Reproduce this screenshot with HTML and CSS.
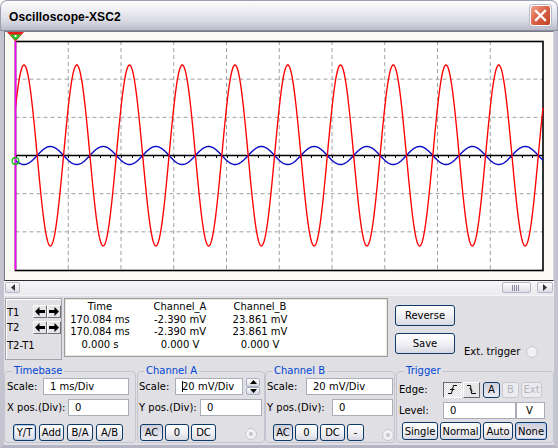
FILE: index.html
```html
<!DOCTYPE html>
<html lang="en">

<head>
    <meta charset="UTF-8">
    <title>Oscilloscope-XSC2</title>
    <link rel="stylesheet" href="styles.css">
</head>

<body>

    <div class="window">
        <div class="titlebar">
            <span class="title">Oscilloscope-XSC2</span>
            <span class="close">
                <svg width="13" height="13" viewBox="0 0 13 13">
                    <path d="M2 2L11 11M11 2L2 11" stroke="#fff" stroke-width="2.4" stroke-linecap="square" />
                </svg>
            </span>
        </div>

        <div class="frame">
            <div class="screen">
                <svg id="plot" width="548" height="248" viewBox="5 32 548 248">
                    <rect x="15.5" y="41.5" width="527.5" height="229" fill="#ffffff" />
                    <g id="grid" stroke="#a0a0a0" stroke-dasharray="4 3" stroke-width="1"></g>
                    <g id="axis" stroke="#000" stroke-width="1.5"></g>
                    <g id="ticks" stroke="#000" stroke-width="1"></g>
                    <rect x="15.5" y="41.5" width="527.5" height="229" fill="none" stroke="#000" stroke-width="1.6" />
                    <path id="waveB" fill="none" stroke="#0a0ac8" stroke-width="1.4" />
                    <path id="waveA" fill="none" stroke="#ff0000" stroke-width="1.35" />
                    <line x1="15.5" y1="34" x2="15.5" y2="270" stroke="#ff00ff" stroke-width="1.6" />
                    <polygon points="7,32 24,32 15.5,41.5" fill="#ee1c1c" />
                    <polygon points="9.5,34.5 21.5,34.5 15.5,40.5" fill="#22c322" />
                    <rect x="14.5" y="35" width="2" height="2" fill="#fff" />
                    <circle cx="15.5" cy="161" r="3.4" fill="none" stroke="#00c000" stroke-width="1.2" />
                </svg>
            </div>

            <div class="scrollbar">
                <span class="sb-btn sb-left">
                    <svg width="6" height="7" viewBox="0 0 6 7"><path d="M5 0V7L1 3.5Z" fill="#333" /></svg>
                </span>
                <span class="sb-thumb">
                    <svg width="9" height="6" viewBox="0 0 9 6"><path d="M0.5 0V6M2.5 0V6M4.5 0V6M6.5 0V6" stroke="#8a8aa0" /></svg>
                </span>
                <span class="sb-btn sb-right">
                    <svg width="6" height="7" viewBox="0 0 6 7"><path d="M1 0V7L5 3.5Z" fill="#333" /></svg>
                </span>
            </div>

            <div class="panel">
                <div class="readout">
                    <div class="tpanel">
                        <span class="tlabel t1">T1</span>
                        <span class="arrows">
                            <span class="abtn"><svg width="10" height="9" viewBox="0 0 10 9"><path d="M0 4.5L4.5 0V3H10V6H4.5V9Z" /></svg></span>
                            <span class="abtn"><svg width="10" height="9" viewBox="0 0 10 9"><path d="M10 4.5L5.5 0V3H0V6H5.5V9Z" /></svg></span>
                        </span>
                        <span class="tlabel">T2</span>
                        <span class="arrows">
                            <span class="abtn"><svg width="10" height="9" viewBox="0 0 10 9"><path d="M0 4.5L4.5 0V3H10V6H4.5V9Z" /></svg></span>
                            <span class="abtn"><svg width="10" height="9" viewBox="0 0 10 9"><path d="M10 4.5L5.5 0V3H0V6H5.5V9Z" /></svg></span>
                        </span>
                        <span class="tlabel tdiff">T2-T1</span>
                    </div>

                    <div class="databox">
                        <span>Time</span><span>Channel_A</span><span>Channel_B</span>
                        <span>170.084 ms</span><span>-2.390 mV</span><span>23.861 mV</span>
                        <span>170.084 ms</span><span>-2.390 mV</span><span>23.861 mV</span>
                        <span>0.000 s</span><span>0.000 V</span><span>0.000 V</span>
                    </div>

                    <div class="actions">
                        <span class="xbtn big">Reverse</span>
                        <span class="xbtn big">Save</span>
                    </div>

                    <div class="ext">
                        <span>Ext. trigger</span>
                        <span class="radio"></span>
                    </div>
                </div>

                <div class="groups">
                    <fieldset class="group timebase">
                        <legend>Timebase</legend>
                        <div class="line row1">
                            <span class="lab">Scale:</span>
                            <span class="field">1 ms/Div</span>
                        </div>
                        <div class="line row2">
                            <span class="lab">X pos.(Div):</span>
                            <span class="field">0</span>
                        </div>
                        <div class="line btnrow">
                            <span class="xbtn focus w23">Y/T</span>
                            <span class="xbtn w25">Add</span>
                            <span class="xbtn w26">B/A</span>
                            <span class="xbtn w27">A/B</span>
                        </div>
                    </fieldset>

                    <fieldset class="group chan-a">
                        <legend>Channel A</legend>
                        <div class="line row1">
                            <span class="lab">Scale:</span>
                            <span class="field"><i class="caret"></i>20 mV/Div</span>
                            <span class="spin">
                                <span class="spin-btn"><svg width="7" height="4" viewBox="0 0 7 4"><path d="M0 4L3.5 0L7 4Z" /></svg></span>
                                <span class="spin-btn"><svg width="7" height="4" viewBox="0 0 7 4"><path d="M0 0L3.5 4L7 0Z" /></svg></span>
                            </span>
                        </div>
                        <div class="line row2">
                            <span class="lab">Y pos.(Div):</span>
                            <span class="field">0</span>
                        </div>
                        <div class="line btnrow">
                            <span class="xbtn on w23">AC</span>
                            <span class="xbtn w24">0</span>
                            <span class="xbtn w25">DC</span>
                            <span class="radio dot"></span>
                        </div>
                    </fieldset>

                    <fieldset class="group chan-b">
                        <legend>Channel B</legend>
                        <div class="line row1">
                            <span class="lab">Scale:</span>
                            <span class="field">20 mV/Div</span>
                        </div>
                        <div class="line row2">
                            <span class="lab">Y pos.(Div):</span>
                            <span class="field">0</span>
                        </div>
                        <div class="line btnrow">
                            <span class="xbtn on w20">AC</span>
                            <span class="xbtn w23">0</span>
                            <span class="xbtn w25">DC</span>
                            <span class="xbtn w17">-</span>
                            <span class="radio dot"></span>
                        </div>
                    </fieldset>

                    <fieldset class="group trigger">
                        <legend>Trigger</legend>
                        <div class="line row1">
                            <span class="lab">Edge:</span>
                            <span class="edge down">
                                <svg width="11" height="11" viewBox="0 0 11 11"><path d="M1 9.5H4.5L6.5 1.5H10M3 5.5H7.5" fill="none" stroke="#000" /></svg>
                            </span>
                            <span class="edge">
                                <svg width="11" height="11" viewBox="0 0 11 11"><path d="M1 1.5H4.5L5.5 9.5H10M3.5 4.5L6.5 7" fill="none" stroke="#000" /></svg>
                            </span>
                            <span class="xbtn on w17 gap-l">A</span>
                            <span class="xbtn off w17">B</span>
                            <span class="xbtn off w21">Ext</span>
                        </div>
                        <div class="line row2">
                            <span class="lab">Level:</span>
                            <span class="field level">0</span>
                            <span class="field unit">V</span>
                        </div>
                        <div class="line btnrow">
                            <span class="xbtn w36">Single</span>
                            <span class="xbtn w41">Normal</span>
                            <span class="xbtn w30">Auto</span>
                            <span class="xbtn focus on w32">None</span>
                        </div>
                    </fieldset>
                </div>
            </div>
        </div>
    </div>

    <script>
        const NS = 'http://www.w3.org/2000/svg';
        const plotLeft = 15.5, plotRight = 543, plotTop = 41, plotBottom = 270;
        const divX = (plotRight - plotLeft) / 10;
        const divY = (plotBottom - plotTop) / 6;
        const mid = plotTop + divY * 3;

        function addLine(group, x1, y1, x2, y2) {
            const l = document.createElementNS(NS, 'line');
            l.setAttribute('x1', x1);
            l.setAttribute('y1', y1);
            l.setAttribute('x2', x2);
            l.setAttribute('y2', y2);
            group.appendChild(l);
        }

        // Dashed grid
        const grid = document.getElementById('grid');
        for (let i = 1; i < 10; i++) {
            const x = plotLeft + i * divX;
            addLine(grid, x, plotTop, x, plotBottom);
        }
        for (let j = 1; j < 6; j++) {
            if (j === 3) continue;
            const y = plotTop + j * divY;
            addLine(grid, plotLeft, y, plotRight, y);
        }

        // Centre axis with small ticks below it
        addLine(document.getElementById('axis'), plotLeft, mid, plotRight, mid);
        const ticks = document.getElementById('ticks');
        for (let x = plotLeft; x < plotRight; x += divX / 5) {
            const tx = Math.round(x) + 0.5;
            addLine(ticks, tx, mid, tx, mid + 2.5);
        }

        // One period per division, channel B is inverted and small
        function wave(amp) {
            let d = '';
            for (let x = plotLeft; x <= plotRight; x += 0.5) {
                const y = mid - amp * Math.cos(2 * Math.PI * (x - 24) / divX);
                d += (d ? 'L' : 'M') + x.toFixed(1) + ' ' + y.toFixed(2);
            }
            return d;
        }
        document.getElementById('waveA').setAttribute('d', wave(90.5));
        document.getElementById('waveB').setAttribute('d', wave(-9));
    </script>

</body>

</html>
```

FILE: styles.css
```css
html {
    background: #ffffff;
}

body {
    margin: 0;
    font-family: "DejaVu Sans", Verdana, sans-serif;
    font-size: 10px;
    color: #000;
}

.window {
    width: 558px;
    height: 448px;
    box-sizing: border-box;
    display: flex;
    flex-direction: column;
}

/* Title bar */
.titlebar {
    height: 31px;
    box-sizing: border-box;
    display: flex;
    align-items: center;
    padding: 2px 6px 0 8px;
    background: linear-gradient(#fdfdfe, #ececf2 35%, #d9d9e3 70%, #b9b9c9);
    border-radius: 7px 7px 0 0;
    border: 1px solid #9d9db0;
    border-bottom: 1px solid #8c8ca0;
}

.title {
    font-family: "Liberation Sans", Arial, sans-serif;
    font-weight: bold;
    font-size: 12px;
    letter-spacing: 0.1px;
}

.close {
    margin-left: auto;
    margin-top: -2px;
    width: 21px;
    height: 21px;
    box-sizing: border-box;
    border: 1px solid #ffffff;
    border-radius: 3px;
    background: linear-gradient(135deg, #f2a593, #dc6548 45%, #bd3e23);
    box-shadow: 0 0 0 1px #b9b9c9;
    display: flex;
    align-items: center;
    justify-content: center;
}

/* Window body */
.frame {
    flex: 1;
    display: flex;
    flex-direction: column;
    background: #e0dfe3;
    border-left: 4px solid #c4c4d0;
    border-right: 4px solid #c4c4d0;
    border-bottom: 3px solid #b4b4c4;
}

.screen {
    height: 250px;
    box-sizing: border-box;
    background: #fbfbf4;
    border-top: 1px solid #7a7a86;
    border-left: 1px solid #7a7a86;
    border-bottom: 1px solid #2c2c2c;
    border-right: 1px solid #d6d6dc;
}

#plot {
    display: block;
}

.scrollbar {
    height: 15px;
    box-sizing: border-box;
    display: flex;
    padding: 1px 1px 0 1px;
    background: linear-gradient(#f6f6f8, #ebebef);
    border-bottom: 1px solid #f4f4f6;
}

.sb-btn {
    width: 15px;
    height: 11px;
    box-sizing: border-box;
    border: 1px solid #b5b5c5;
    border-radius: 2px;
    background: linear-gradient(#ffffff, #dcdce6);
    display: flex;
    align-items: center;
    justify-content: center;
}

.sb-thumb {
    margin-left: auto;
    margin-right: 6px;
    width: 29px;
    height: 11px;
    box-sizing: border-box;
    border: 1px solid #b5b5c5;
    border-radius: 2px;
    background: linear-gradient(#ffffff, #dcdce6);
    display: flex;
    align-items: center;
    justify-content: center;
}

.sb-right {
    width: 16px;
}

.panel {
    flex: 1;
    display: flex;
    flex-direction: column;
}

/* Cursor readout */
.readout {
    display: flex;
    height: 62px;
    margin-top: 2px;
}

.tpanel {
    width: 57px;
    margin-left: 1px;
    box-sizing: border-box;
    border: 1px solid #a2a2ae;
    box-shadow: inset 1px 1px #ffffff;
    display: grid;
    grid-template-columns: 26px 28px;
    grid-template-rows: 13px 13px 12px;
    row-gap: 3px;
    padding: 6px 0 0 1px;
}

.tlabel {
    align-self: center;
    line-height: 12px;
}

.t1 {
    margin-top: 3px;
}

.tdiff {
    grid-column: 1 / 3;
    margin-top: 6px;
}

.arrows {
    display: flex;
}

.abtn {
    width: 14px;
    height: 13px;
    box-sizing: border-box;
    border: 1px solid;
    border-color: #ffffff #707070 #707070 #ffffff;
    background: #e6e6e8;
    display: flex;
    align-items: center;
    justify-content: center;
}

.databox {
    margin-left: 2px;
    width: 324px;
    height: 59px;
    box-sizing: border-box;
    background: #ffffff;
    border: 1px solid #9a9aa4;
    box-shadow: inset 0 0 0 1px #ecead6;
    display: grid;
    grid-template-columns: 70px 90px 70px;
    grid-auto-rows: 12.6px;
    align-content: start;
    padding-top: 2px;
    line-height: 12.6px;
    text-align: center;
    white-space: nowrap;
}

.actions {
    margin-left: 7px;
    padding-top: 7px;
    display: flex;
    flex-direction: column;
    gap: 7px;
}

.ext {
    margin-left: 9px;
    align-self: flex-end;
    margin-bottom: 2px;
    display: flex;
    align-items: center;
    gap: 6px;
    line-height: 12px;
}

/* Buttons and fields */
.xbtn {
    height: 17px;
    box-sizing: border-box;
    border: 1px solid #0e3a6a;
    border-radius: 3px;
    background: linear-gradient(#ffffff, #f1f1f5 50%, #d8d8e2);
    display: inline-flex;
    align-items: center;
    justify-content: center;
    line-height: 15px;
}

.xbtn.big {
    width: 60px;
    height: 21px;
}

.xbtn.on {
    background: linear-gradient(#cfcfdb, #dedee8 50%, #ececf2);
}

.xbtn.focus {
    box-shadow: inset 0 0 0 1px #b8ccee;
}

.xbtn.off {
    color: #b4b4bc;
    border-color: #c8c8d0;
    background: #ececf0;
}

.w17 { width: 17px; }
.w20 { width: 20px; }
.w21 { width: 21px; }
.w23 { width: 23px; }
.w24 { width: 24px; }
.w25 { width: 25px; }
.w26 { width: 26px; }
.w27 { width: 27px; }
.w30 { width: 30px; }
.w32 { width: 32px; }
.w36 { width: 36px; }
.w41 { width: 41px; }

.field {
    height: 17px;
    box-sizing: border-box;
    background: #ffffff;
    border: 1px solid #a8adb6;
    padding-left: 6px;
    line-height: 15px;
    white-space: nowrap;
    display: flex;
    align-items: center;
}

.caret {
    width: 1px;
    height: 11px;
    background: #000;
    margin-right: -1px;
}

.radio {
    width: 12px;
    height: 12px;
    box-sizing: border-box;
    border: 1px solid #c6c6cc;
    border-radius: 50%;
    background: #f2f2f4;
    display: flex;
    align-items: center;
    justify-content: center;
}

.radio.dot::after {
    content: "";
    width: 4px;
    height: 4px;
    border-radius: 50%;
    background: #c4c4ca;
}

.spin {
    margin-left: 3px;
    width: 14px;
    height: 17px;
    display: flex;
    flex-direction: column;
}

.spin-btn {
    flex: 1;
    box-sizing: border-box;
    border: 1px solid #a8adc0;
    border-radius: 2px;
    background: linear-gradient(#ffffff, #d8d8e4);
    display: flex;
    align-items: center;
    justify-content: center;
}

.edge {
    width: 17px;
    height: 16px;
    box-sizing: border-box;
    border: 1px solid;
    border-color: #ffffff #6a6a6a #6a6a6a #ffffff;
    background: #e6e6e8;
    display: flex;
    align-items: center;
    justify-content: center;
}

.edge.down {
    width: 19px;
    margin-right: 1px;
    border-color: #6a6a6a #ffffff #ffffff #6a6a6a;
    background: repeating-conic-gradient(#ffffff 0 25%, #dcdce0 0 50%) 0 0 / 2px 2px;
}

/* Group boxes */
.groups {
    display: flex;
    margin-top: 5px;
}

.group {
    margin: 0;
    padding: 0;
    min-width: 0;
    height: 78px;
    box-sizing: border-box;
    border: 1px solid #c4c4ce;
    border-radius: 4px;
}

.group legend {
    padding: 0 2px;
    margin-left: 5px;
    color: #0046d5;
    line-height: 12px;
}

.line {
    display: flex;
    align-items: center;
    height: 17px;
}

.row1 {
    margin-top: 1px;
}

.row2 {
    margin-top: 4px;
}

.btnrow {
    margin-top: 8px;
    gap: 2px;
}

.timebase {
    width: 132px;
    padding-left: 2px;
}

.timebase .row1 .lab { width: 36px; }
.timebase .row1 .field { width: 86px; }
.timebase .row2 .lab { width: 61px; }
.timebase .row2 .field { width: 61px; }
.timebase .btnrow { padding-left: 6px; gap: 3px; }

.chan-a {
    width: 128px;
    margin-left: 1px;
    padding-left: 1px;
}

.chan-a .row1 .lab { width: 36px; }
.chan-a .row1 .field { width: 68px; }
.chan-a .row2 .lab { width: 61px; }
.chan-a .row2 .field { width: 62px; }
.chan-a .btnrow { padding-left: 1px; gap: 2px; }
.chan-a .radio { margin-left: 27px; margin-top: 3px; }

.chan-b {
    width: 130px;
    padding-left: 1px;
}

.chan-b .row1 .lab { width: 39px; }
.chan-b .row1 .field { width: 87px; }
.chan-b .row2 .lab { width: 65px; }
.chan-b .row2 .field { width: 61px; }
.chan-b .btnrow { padding-left: 6px; gap: 2px; }
.chan-b .radio { margin-left: 16px; margin-top: 4px; }

.trigger {
    width: 158px;
    margin-left: 1px;
    padding-left: 2px;
}

.trigger .lab { width: 44px; }
.trigger .row1 { margin-top: 4px; height: 17px; gap: 0; }
.trigger .row1 .xbtn { height: 16px; margin-left: 2px; }
.trigger .row1 .gap-l { margin-left: 3px; }
.trigger .row2 { margin-top: 4px; }
.trigger .level { width: 73px; }
.trigger .unit { width: 29px; padding-left: 9px; }
.trigger .btnrow { margin-top: 3px; height: 18px; padding-left: 3px; gap: 2px; }
.trigger .btnrow .xbtn { height: 18px; }
```
